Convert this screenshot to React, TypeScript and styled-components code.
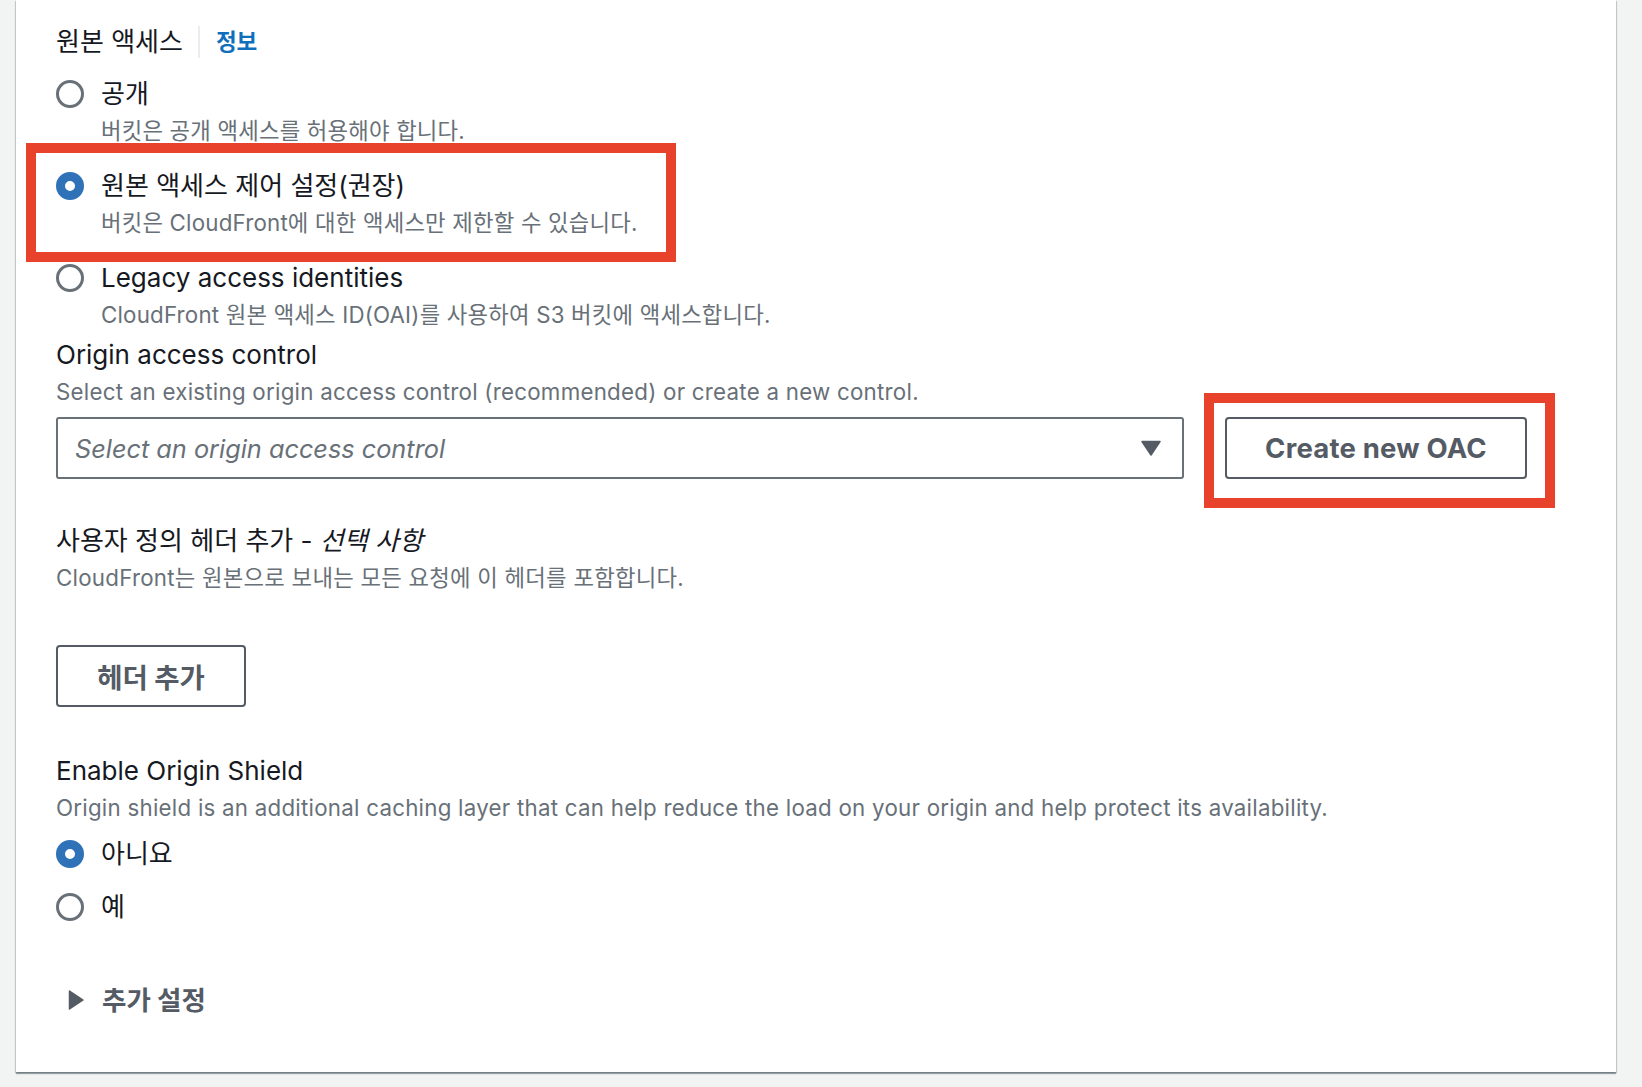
import React from "react";
import styled, { createGlobalStyle, css } from "styled-components";

const FONT = `Inter, "Noto Sans CJK KR", sans-serif`;

const GlobalStyle = createGlobalStyle`
  html, body { margin: 0; padding: 0; background: #f2f3f3; }
  body { font-family: ${FONT}; color: #16191f; -webkit-font-smoothing: antialiased; }
  *, *::before, *::after { box-sizing: border-box; }
`;

const Page = styled.div`
  padding: 0 26px 15px 16px;
  min-height: 100vh;
`;

const Card = styled.section`
  background: #ffffff;
  box-shadow: 0 2px 1px 0 rgba(0, 28, 36, 0.35), 1px 1px 1px 0 rgba(0, 28, 36, 0.15),
    -1px 1px 1px 0 rgba(0, 28, 36, 0.15);
  padding: 24px 40px 53px 40px;
  display: flex;
  flex-direction: column;
`;

const HeadingRow = styled.div`
  display: flex;
  align-items: center;
  height: 36px;
`;

const HeadingText = styled.span`
  font-size: 26px;
  line-height: 36px;
  color: #16191f;
`;

const Divider = styled.span`
  width: 2px;
  height: 32px;
  background: #eaeded;
  margin: 0 16px 0 15px;
`;

const InfoLink = styled.a`
  font-size: 22.5px;
  font-weight: 700;
  line-height: 36px;
  color: #0f6fbd;
  text-decoration: none;
`;

const RadioGroup = styled.div<{ $top: number; $gap: number }>`
  display: flex;
  flex-direction: column;
  gap: ${(p) => p.$gap}px;
  margin-top: ${(p) => p.$top}px;
`;

const Option = styled.div<{ $highlight?: boolean }>`
  display: flex;
  flex-direction: column;
  position: relative;
  ${(p) =>
    p.$highlight &&
    css`
      &::after {
        content: "";
        position: absolute;
        top: -24px;
        left: -30px;
        width: 650px;
        bottom: -21px;
        border: 10px solid #e8412c;
        pointer-events: none;
      }
    `}
`;

const LabelRow = styled.label`
  display: flex;
  align-items: center;
  gap: 17px;
  height: 38px;
  cursor: pointer;
`;

const Circle = styled.span<{ $checked?: boolean }>`
  flex: 0 0 28px;
  width: 28px;
  height: 28px;
  border-radius: 50%;
  background: #ffffff;
  border: ${(p) => (p.$checked ? "9px solid #2f72b8" : "3px solid #687078")};
`;

const RadioText = styled.span`
  font-size: 26px;
  line-height: 38px;
  color: #16191f;
  white-space: nowrap;
`;

const OptionDesc = styled.div`
  padding-left: 45px;
  font-size: 22.3px;
  letter-spacing: 0.2px;
  line-height: 36px;
  color: #687078;
  white-space: nowrap;
`;

const Field = styled.div<{ $top: number }>`
  display: flex;
  flex-direction: column;
  margin-top: ${(p) => p.$top}px;
`;

const FieldLabel = styled.div`
  font-size: 26px;
  line-height: 36px;
  color: #16191f;
  white-space: nowrap;
  em {
    font-style: italic;
  }
`;

const FieldDesc = styled.div`
  font-size: 22.3px;
  letter-spacing: 0.25px;
  line-height: 38px;
  color: #687078;
  white-space: nowrap;
`;

const ControlRow = styled.div`
  display: flex;
  align-items: center;
  gap: 41px;
  margin-top: 6px;
`;

const SelectBox = styled.div`
  flex: 0 0 1128px;
  height: 62px;
  border: 2px solid #687078;
  border-radius: 3px;
  display: flex;
  align-items: center;
  justify-content: space-between;
  padding: 0 21px 0 17px;
`;

const Placeholder = styled.span`
  font-size: 25.3px;
  font-style: italic;
  color: #687078;
  white-space: nowrap;
`;

const Annotated = styled.div<{ $top: number; $right: number; $bottom: number; $left: number }>`
  position: relative;
  display: flex;
  &::after {
    content: "";
    position: absolute;
    top: -${(p) => p.$top}px;
    right: -${(p) => p.$right}px;
    bottom: -${(p) => p.$bottom}px;
    left: -${(p) => p.$left}px;
    border: 10px solid #e8412c;
    pointer-events: none;
  }
`;

const Button = styled.button<{ $width: number; $size: number; $spacing?: number }>`
  width: ${(p) => p.$width}px;
  height: 62px;
  background: #ffffff;
  border: 2px solid #545b64;
  border-radius: 4px;
  color: #545b64;
  font-family: ${FONT};
  font-size: ${(p) => p.$size}px;
  letter-spacing: ${(p) => p.$spacing ?? 0}px;
  font-weight: 700;
  padding: 0;
  white-space: nowrap;
  cursor: pointer;
`;

const ButtonSlot = styled.div<{ $top: number }>`
  display: flex;
  margin-top: ${(p) => p.$top}px;
`;

const Expander = styled.div<{ $top: number }>`
  display: flex;
  align-items: center;
  height: 38px;
  margin-top: ${(p) => p.$top}px;
  padding-left: 12px;
  gap: 18px;
  cursor: pointer;
`;

const ExpanderText = styled.span`
  font-size: 26.5px;
  font-weight: 700;
  color: #545b64;
  line-height: 38px;
`;

type Opt = { label: string; desc?: string; checked?: boolean; highlight?: boolean };

const Radio: React.FC<Opt> = ({ label, desc, checked, highlight }) => (
  <Option $highlight={highlight}>
    <LabelRow>
      <Circle $checked={checked} />
      <RadioText>{label}</RadioText>
    </LabelRow>
    {desc && <OptionDesc>{desc}</OptionDesc>}
  </Option>
);

const Caret = () => (
  <svg width="20" height="16" viewBox="0 0 20 16" aria-hidden>
    <path d="M1 1.5 L19 1.5 L10 15 Z" fill="#545b64" stroke="#545b64" strokeWidth="1.5" strokeLinejoin="round" />
  </svg>
);

const RightTriangle = () => (
  <svg width="16" height="20" viewBox="0 0 16 20" aria-hidden>
    <path d="M1.5 1 L15 10 L1.5 19 Z" fill="#545b64" stroke="#545b64" strokeWidth="1.5" strokeLinejoin="round" />
  </svg>
);

export default function App() {
  return (
    <>
      <GlobalStyle />
      <Page>
        <Card>
          <HeadingRow>
            <HeadingText>원본 액세스</HeadingText>
            <Divider />
            <InfoLink href="#">정보</InfoLink>
          </HeadingRow>

          <RadioGroup $top={15} $gap={18}>
            <Radio label="공개" desc="버킷은 공개 액세스를 허용해야 합니다." />
            <Radio
              label="원본 액세스 제어 설정(권장)"
              desc="버킷은 CloudFront에 대한 액세스만 제한할 수 있습니다."
              checked
              highlight
            />
            <Radio
              label="Legacy access identities"
              desc="CloudFront 원본 액세스 ID(OAI)를 사용하여 S3 버킷에 액세스합니다."
            />
          </RadioGroup>

          <Field $top={4}>
            <FieldLabel>Origin access control</FieldLabel>
            <FieldDesc>Select an existing origin access control (recommended) or create a new control.</FieldDesc>
            <ControlRow>
              <SelectBox>
                <Placeholder>Select an origin access control</Placeholder>
                <Caret />
              </SelectBox>
              <Annotated $top={24} $right={28} $bottom={29} $left={21}>
                <Button $width={302} $size={27.5} $spacing={0.2}>
                  Create new OAC
                </Button>
              </Annotated>
            </ControlRow>
          </Field>

          <Field $top={44}>
            <FieldLabel>
              사용자 정의 헤더 추가 - <em>선택 사항</em>
            </FieldLabel>
            <FieldDesc>CloudFront는 원본으로 보내는 모든 요청에 이 헤더를 포함합니다.</FieldDesc>
          </Field>
          <ButtonSlot $top={48}>
            <Button $width={190} $size={27.5}>
              헤더 추가
            </Button>
          </ButtonSlot>

          <Field $top={46}>
            <FieldLabel>Enable Origin Shield</FieldLabel>
            <FieldDesc>
              Origin shield is an additional caching layer that can help reduce the load on your origin and help
              protect its availability.
            </FieldDesc>
          </Field>
          <RadioGroup $top={8} $gap={15}>
            <Radio label="아니요" checked />
            <Radio label="예" />
          </RadioGroup>

          <Expander $top={55}>
            <RightTriangle />
            <ExpanderText>추가 설정</ExpanderText>
          </Expander>
        </Card>
      </Page>
    </>
  );
}
